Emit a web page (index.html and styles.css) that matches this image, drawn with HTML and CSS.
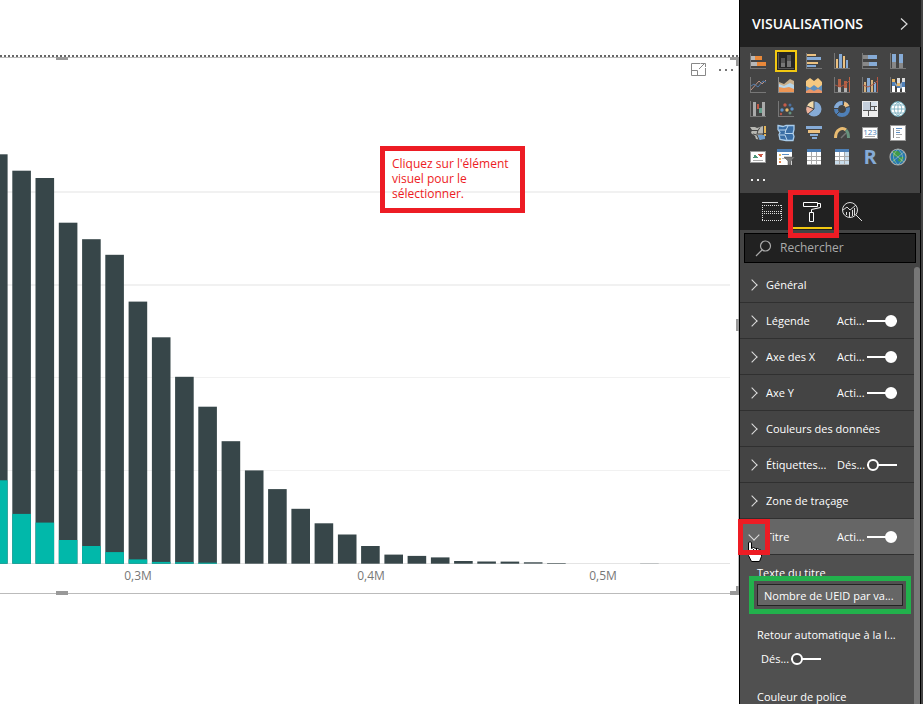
FILE: index.html
```html
<!DOCTYPE html>
<html lang="fr">
<head>
<meta charset="utf-8">
<title>Visualisations</title>
<link rel="stylesheet" href="styles.css">
</head>
<body>
<main class="canvas">
  <section class="visual">
    <svg class="chart" viewBox="0 58 738 535" role="img" aria-label="Histogramme">
      <g fill="#f1f1f1"><path d="M0 191h730v2H0zM0 284h730v2H0zM0 377h730v1H0zM0 470h730v1H0z"/><path fill="#e4e4e4" d="M0 563h730v1H0z"/></g>
      <g fill="#374649">
        <rect x="0" y="154.3" width="7.6" height="409.4"/>
        <rect x="12.3" y="170.7" width="18.6" height="393"/>
        <rect x="35.5" y="178" width="18.6" height="385.7"/>
        <rect x="58.8" y="222.7" width="18.6" height="341"/>
        <rect x="82.1" y="239.2" width="18.6" height="324.5"/>
        <rect x="105.3" y="254.8" width="18.6" height="308.9"/>
        <rect x="128.6" y="301.6" width="18.6" height="262.1"/>
        <rect x="151.9" y="337.3" width="18.6" height="226.4"/>
        <rect x="175.1" y="376.8" width="18.6" height="186.9"/>
        <rect x="198.3" y="406.7" width="18.6" height="157"/>
        <rect x="221.6" y="441.2" width="18.6" height="122.5"/>
        <rect x="244.9" y="470.4" width="18.6" height="93.3"/>
        <rect x="268.1" y="489.1" width="18.6" height="74.6"/>
        <rect x="291.4" y="508.8" width="18.6" height="54.9"/>
        <rect x="314.6" y="523.3" width="18.6" height="40.4"/>
        <rect x="337.9" y="534.5" width="18.6" height="29.2"/>
        <rect x="361.1" y="546" width="18.6" height="17.7"/>
        <rect x="384.4" y="554.6" width="18.6" height="9.1"/>
        <rect x="407.6" y="555.9" width="18.6" height="7.8"/>
        <rect x="430.9" y="557.4" width="18.6" height="6.3"/>
        <rect x="454.1" y="561" width="18.6" height="2.7"/>
        <rect x="477.3" y="561.5" width="18.6" height="2.2"/>
        <rect x="500.6" y="561.6" width="18.6" height="2.1"/>
        <rect x="523.9" y="562.3" width="18.6" height="1.3"/>
        <rect x="547.1" y="563" width="18.6" height=".6"/>
        <rect x="640.1" y="563.3" width="18.6" height=".2"/>
      </g>
      <g fill="#01b8aa">
        <rect x="0" y="480.3" width="7.6" height="83.4"/>
        <rect x="12.3" y="513.9" width="18.6" height="49.8"/>
        <rect x="35.5" y="522.6" width="18.6" height="41.1"/>
        <rect x="58.8" y="540" width="18.6" height="23.7"/>
        <rect x="82.1" y="546" width="18.6" height="17.7"/>
        <rect x="105.3" y="552.1" width="18.6" height="11.6"/>
        <rect x="128.6" y="559.4" width="18.6" height="4.3"/>
        <rect x="151.9" y="561.9" width="18.6" height="1.8"/>
        <rect x="175.1" y="562.2" width="18.6" height="1.5"/>
        <rect x="198.3" y="562.7" width="18.6" height="1"/>
      </g>
      <g class="axis" text-anchor="middle">
        <text x="138" y="580">0,3M</text><text x="371" y="580">0,4M</text><text x="603" y="580">0,5M</text>
      </g>
    </svg>
    <div class="visual-tools">
      <button aria-label="Mode focus"><svg width="15" height="13" viewBox="0 0 15 13" fill="none" stroke="#888"><path d="M9.5.5h-9v12h14V5M.5 7.500h6v5M8 6l5.500-5.500M10 .5h4.500V4"/></svg></button>
      <button aria-label="Plus d’options"><svg width="16" height="2" viewBox="0 0 16 2" fill="#777"><path d="M1 0h2v2H1zM7 0h2v2H7zM13 0h2v2h-2z"/></svg></button>
    </div>
    <i class="handle top"></i><i class="handle bottom"></i><i class="handle side"></i>
    <i class="corner upper"></i><i class="corner lower"></i>
    <p class="callout">Cliquez sur l'élément visuel pour le sélectionner.</p>
  </section>
</main>

<aside class="panel">
  <header class="panel-head">
    <h1>VISUALISATIONS</h1>
    <button aria-label="Réduire le volet"><svg width="8" height="12" viewBox="0 0 8 12" fill="none" stroke="#ddd" stroke-width="1.200"><path d="M1 .5L7 6l-6 5.500"/></svg></button>
  </header>

  <div class="gallery">
    <button aria-label="Barres empilées"><svg viewBox="0 0 16 16"><path fill="#777" d="M0 0h1v15h15v1H0z"/><path fill="#b8b8b8" d="M1 3h4v4H1zM1 9h6v4H1z"/><path fill="#e8883a" d="M5 3h7v4H5zM7 9h9v4H7z"/></svg></button>
    <button class="chosen" aria-label="Histogramme empilé"><svg viewBox="0 0 16 16"><path fill="#555" d="M0 0h1v15h15v1H0zM3 5h4v9H3zM9 2h4v12H9z"/><path fill="#777" d="M3 10h4v4H3zM9 8h4v6H9z"/></svg></button>
    <button aria-label="Barres groupées"><svg viewBox="0 0 16 16"><path fill="#777" d="M0 0h1v15h15v1H0z"/><path fill="#ecc180" d="M1 1h9v2H1zM1 9h11v2H1z"/><path fill="#86abd6" d="M1 4h14v3H1zM1 12h9v2H1z"/></svg></button>
    <button aria-label="Histogramme groupé"><svg viewBox="0 0 16 16"><path fill="#777" d="M0 0h1v15h15v1H0z"/><path fill="#ecc180" d="M2 6h2v9H2zM9 3h2v12H9z"/><path fill="#86abd6" d="M5 1h3v14H5zM12 7h2v8h-2z"/></svg></button>
    <button aria-label="Barres 100 %"><svg viewBox="0 0 16 16"><path fill="#777" d="M0 0h1v15h15v1H0z"/><path fill="#888" d="M1 2h5v4H1zM1 9h6v4H1z"/><path fill="#86abd6" d="M6 2h9v4H6zM7 9h8v4H7z"/></svg></button>
    <button aria-label="Histogramme 100 %"><svg viewBox="0 0 16 16"><path fill="#777" d="M0 0h1v15h15v1H0z"/><path fill="#888" d="M2 8h4v7H2zM9 10h4v5H9z"/><path fill="#86abd6" d="M2 1h4v8H2zM9 1h4v9H9z"/></svg></button>

    <button aria-label="Courbes"><svg viewBox="0 0 16 16"><path fill="#777" d="M0 0h1v15h15v1H0z"/><g class="smooth" fill="none"><path stroke="#c09283" d="M1 13L9 4l3 3 4-4"/><path stroke="#547ba9" d="M1 9l3-2 4 3 5-6 3 1"/></g></svg></button>
    <button aria-label="Aires"><svg class="smooth" viewBox="0 0 16 16"><path fill="#c9b18e" d="M1 5l5 2 6-5 4 2v8H1z"/><path fill="#b7d6ea" d="M1 7l5 2 6-3 4 2v6H1z"/><path fill="#ed9655" d="M1 10l5 1 5-1 5 2v3H1z"/><path fill="#888" d="M0 0h1v15h15v1H0z"/></svg></button>
    <button aria-label="Aires empilées"><svg class="smooth" viewBox="0 0 16 16"><path fill="#f5c880" d="M0 4l4-3 4 3 4-3 4 4v9H0z"/><path fill="#5f8fbd" d="M0 9l4 2 4-3 4 3 4-3v6H0z"/><path fill="#e99668" d="M0 14l4-2 4 2 4-2 4 2v2H0z"/></svg></button>
    <button aria-label="Courbe et histogramme empilé"><svg viewBox="0 0 16 16"><path fill="#777" d="M0 0h1v15h15v1H0z"/><path fill="#b86245" d="M4 2h3v8H4zM10 4h3v7h-3zM15 0h1v15h-1z"/><path fill="#b3b3b3" d="M4 10h3v5H4zM10 11h3v4h-3z"/><path class="smooth" fill="none" stroke="#a65643" d="M1 8l5 2 6-3 4-4"/></svg></button>
    <button aria-label="Courbe et histogramme groupé"><svg viewBox="0 0 16 16"><path fill="#777" d="M0 0h1v15h15v1H0z"/><path fill="#d6b17d" d="M2 5h2v10H2zM9 3h2v12H9z"/><path fill="#86abd6" d="M5 1h3v14H5zM12 5h2v10h-2z"/><path fill="#b65643" d="M15 0h1v15h-1z"/><path class="smooth" fill="none" stroke="#a65643" d="M1 8l5 2 6-3 4-4"/></svg></button>
    <button aria-label="Ruban"><svg viewBox="0 0 16 16"><path fill="#777" d="M0 0h1v15h15v1H0z"/><path class="smooth" fill="#8da8c4" d="M3 5h2l3 4 5-5v7l-4 1-4-4z"/><path fill="#e9b967" d="M2 2h3v3H2zM7 6h3v3H7z"/><path fill="#ddd" d="M7 1h3v5H7zM12 1h3v4h-3z"/><path fill="#fff" d="M2 9h3v6H2zM7 11h3v4H7zM12 10h3v5h-3z"/><path fill="#4f80b8" d="M2 5h3v4H2zM7 9h3v2H7zM12 5h3v5h-3z"/></svg></button>

    <button aria-label="Cascade"><svg viewBox="0 0 16 16"><path fill="#777" d="M0 0h1v15h15v1H0z"/><path fill="#aaa" d="M3 1h3v14H3zM12 1h3v14h-3z"/><path fill="#c25c49" d="M7 3h2v5H7z"/><path fill="#67a08d" d="M9 7h3v5H9z"/></svg></button>
    <button aria-label="Nuage de points"><svg viewBox="0 0 16 16"><path fill="#777" d="M0 0h1v15h15v1H0z"/><g class="smooth"><circle cx="7" cy="4" r="1.700" fill="#c85c49"/><circle cx="12" cy="4" r="1.500" fill="#4b6f9e"/><circle cx="4" cy="9" r="1.700" fill="#5d91c7"/><circle cx="9" cy="9" r="1.700" fill="#ecbd6c"/><circle cx="14" cy="8" r="1.700" fill="#5d91c7"/><circle cx="12" cy="12" r="1.500" fill="#65927d"/><circle cx="3" cy="13" r="1.200" fill="#b75847"/></g></svg></button>
    <button aria-label="Secteurs"><svg class="smooth" viewBox="0 0 16 16"><circle cx="8" cy="8" r="7.500" fill="#86abd6"/><path fill="#edb09a" d="M8 8L2 13A8 8 0 0 1 1 5z"/><path fill="#f0d9aa" d="M8 8L1 5a8 8 0 0 1 7-5z"/><path stroke="#444" fill="none" d="M8 0v8L2 13M8 8L1 5"/></svg></button>
    <button aria-label="Anneau"><svg class="smooth" viewBox="0 0 16 16" fill="none" stroke-width="4"><circle cx="8" cy="8" r="6" stroke="#4f80b8"/><path stroke="#86abd6" d="M2 8a6 6 0 0 1 6-6"/><path stroke="#efc286" d="M10 2.300a6 6 0 0 1 3.500 3.500"/><path stroke="#444" stroke-width="1" d="M9.500 0v4M12 6.500l4-1M2 14l3-3M0 7.500h4"/></svg></button>
    <button aria-label="Treemap"><svg viewBox="0 0 16 16"><path fill="#eee" d="M0 0h16v16H0z"/><path fill="#c4cfdc" d="M1 1h7v8H1z"/><path fill="#d9e2ec" d="M9 1h6v4H9zM9 6h3v3H9z"/><path fill="#555" d="M8 1h1v8H8zM1 9h14v1H1zM9 5h6v1H9zM12 6h1v3h-1zM6 10h1v5H6z"/></svg></button>
    <button aria-label="Carte"><svg class="smooth" viewBox="0 0 16 16"><circle cx="8" cy="8" r="7.300" fill="#fff" stroke="#79b8c7"/><path fill="none" stroke="#6da6b9" stroke-width=".8" d="M8 0v16M0 8h16M2 4h12M2 12h12M8 1c-5 4-5 10 0 14M8 1c5 4 5 10 0 14"/></svg></button>

    <button aria-label="Carte choroplèthe"><svg viewBox="0 0 16 16"><g class="smooth"><path fill="#b7b7b2" d="M0 2h5l2 1 6-2v7l-2 7-5-1-1-3-4-3 1-3z"/><path fill="#6f9dcc" d="M8 10l7 0v4l-6 1z"/><path fill="none" stroke="#444" d="M0 5.500h8l2-3M8 5l-1 4h7M3 9l4 1 2 5"/></g><path fill="#e4b65a" d="M14 1h2v7h-2zM14 9h2v2h-2z"/></svg></button>
    <button aria-label="Carte de formes"><svg class="smooth wide" viewBox="-1 0 18 17"><path fill="#3a6ea5" stroke="#a9cceb" stroke-width="1.300" d="M0 1l5 1 3-1h8v4l-1 4 1 3-1 4H8l-6-1-1-5 1-2-2-3z"/><path fill="none" stroke="#b9d5ed" d="M1 5.500h7l2-4M8 5l-1 4h8M2 10.500h5l2 5"/></svg></button>
    <button aria-label="Entonnoir"><svg viewBox="0 0 16 16"><path fill="#86abd6" d="M0 1h16v3H0zM4 9h8v2H4zM6 12h5v2H6z"/><path fill="#ecc180" d="M2 5h12v3H2z"/></svg></button>
    <button aria-label="Jauge"><svg class="smooth" viewBox="0 0 16 16" fill="none"><path stroke="#e8bb72" stroke-width="3" d="M1.500 13c0-9 7-11 10.500-8"/><path stroke="#67927d" stroke-width="3" d="M12 5c2 2 2.500 4 2.500 8"/><path stroke="#777" stroke-width="1.500" d="M7 13l5-5"/></svg></button>
    <button aria-label="Carte de valeur"><svg viewBox="0 0 16 16"><path fill="#999" d="M0 2h16v12H0z"/><path fill="#fff" d="M1 3h14v10H1z"/><text x="8" y="10" font-size="8" text-anchor="middle" fill="#4e83b8">123</text><path fill="#aaa" d="M3 11h10v1H3z"/></svg></button>
    <button aria-label="Carte à plusieurs lignes"><svg viewBox="0 0 16 16"><path fill="#999" d="M0 0h16v16H0z"/><path fill="#fff" d="M1 1h14v14H1z"/><path fill="#888" d="M3 3h1v10H3z"/><path fill="#5d90c6" d="M6 3h6v1H6zM6 7h4v1H6z"/><path fill="#aaa" d="M6 5h4v1H6zM6 9h6v1H6zM6 12h4v1H6z"/></svg></button>

    <button aria-label="Indicateur KPI"><svg viewBox="0 0 16 16"><path fill="#999" d="M0 2h16v12H0z"/><path fill="#fff" d="M1 3h14v10H1z"/><path fill="#4f9678" d="M3 9l2-4 3 4z"/><path fill="#c95745" d="M8 5h5l-2 4z"/><path fill="#aaa" d="M3 11h10v1H3z"/></svg></button>
    <button aria-label="Segment"><svg class="wide" viewBox="0 0 18 16"><path fill="#fff" d="M0 0h15v16H0z"/><path fill="#4d80b7" d="M0 0h15v3H0z"/><path fill="#5d90c6" d="M5 5h7v1H5z"/><path fill="#e6b967" d="M2 5h2v2H2zM2 9h2v2H2z"/><path fill="#e4804a" d="M2 12h2v2H2z"/><path fill="#bbb" d="M5 9h4v1H5z"/><path class="smooth" fill="#777" stroke="#444" stroke-width=".5" d="M7 8h11l-4 4v4h-3v-4z"/></svg></button>
    <button aria-label="Tableau"><svg viewBox="0 0 16 16"><path fill="#fff" d="M1 0h14v16H1z"/><path fill="#4d80b7" d="M1 0h14v3H1z"/><path fill="#aaa" d="M1 7h14v1H1zM1 11h14v1H1zM5 3h1v12H5zM10 3h1v12h-1zM1 15h14v1H1z"/></svg></button>
    <button aria-label="Matrice"><svg viewBox="0 0 16 16"><path fill="#fff" d="M1 0h14v16H1z"/><path fill="#c9ddec" d="M11 3h4v12H1v-3h10z"/><path fill="#4d80b7" d="M1 0h14v3H1z"/><path fill="#aaa" d="M1 7h14v1H1zM1 11h14v1H1zM5 3h1v12H5zM10 3h1v12h-1zM1 15h14v1H1z"/></svg></button>
    <button class="script" aria-label="Visuel R">R</button>
    <button aria-label="ArcGIS"><svg class="smooth wide" viewBox="0 0 18 18"><circle cx="9" cy="9" r="8" fill="#2378ae" stroke="#aaa" stroke-width="1.200"/><path fill="#3f9a48" d="M4 3l5 0 3 3-4 3-4-1zM10 9l5 0-2 5-4-1zM3 11l3 1 1 3z"/><path fill="none" stroke="#b0c7bc" stroke-width=".6" d="M3 4l12 10M15 4L3 14M9 1c-6 6-6 10 0 16M9 1c6 6 6 10 0 16"/></svg></button>
    <button class="more" aria-label="Autres visuels"><svg viewBox="0 0 16 16" fill="#eee"><path d="M1 6h2v2H1zM7 6h2v2H7zM13 6h2v2h-2z"/></svg></button>
  </div>

  <nav class="tabs">
    <button aria-label="Champs"><svg width="22" height="20" viewBox="0 0 22 20" fill="none" stroke="#ddd"><path d="M1 .5h16"/><path stroke-dasharray="1 1" d="M1 3.500h20M1 9.500h20M1 11.500h20M1 18.500h20M1.500 3v7M20.500 3v7M1.500 11v8M20.500 11v8"/></svg></button>
    <button class="current" aria-label="Format"><svg width="20" height="22" viewBox="0 0 20 22" fill="none" stroke="#fff"><path d="M1.500 1.500h14v4h-14zM15.500 2.500h3v4l-9 2v3M7.500 11.500h4v9h-4z"/></svg></button>
    <button aria-label="Analytique"><svg width="22" height="22" viewBox="0 0 22 22" fill="none" stroke="#ddd"><circle cx="9" cy="9" r="7.500"/><path d="M15 14l6 6M2 9l4-3 3 3 6-5M5.500 11v3M8.500 11v5M11.500 9v6M13.500 7v7"/></svg></button>
  </nav>

  <div class="search">
    <svg width="17" height="17" viewBox="0 0 17 17" fill="none" stroke="#aaa" stroke-width="1.200"><circle cx="10.500" cy="6" r="5"/><path d="M7 10l-6 6"/></svg>
    <input type="search" placeholder="Rechercher" aria-label="Rechercher">
  </div>

  <div class="scroller">
    <div class="options">
      <div class="row"><button class="fold"><i class="chevron"></i>Général</button></div>
      <div class="row"><button class="fold"><i class="chevron"></i>Légende</button><label class="toggle">Acti...<input type="checkbox" checked></label></div>
      <div class="row"><button class="fold"><i class="chevron"></i>Axe des X</button><label class="toggle">Acti...<input type="checkbox" checked></label></div>
      <div class="row"><button class="fold"><i class="chevron"></i>Axe Y</button><label class="toggle">Acti...<input type="checkbox" checked></label></div>
      <div class="row"><button class="fold"><i class="chevron"></i>Couleurs des données</button></div>
      <div class="row"><button class="fold"><i class="chevron"></i>Étiquettes...</button><label class="toggle">Dés...<input type="checkbox"></label></div>
      <div class="row"><button class="fold"><i class="chevron"></i>Zone de traçage</button></div>
      <div class="row open"><button class="fold"><i class="chevron"></i>Titre</button><label class="toggle">Acti...<input type="checkbox" checked></label>
        <svg class="pointer" width="17" height="22" viewBox="0 0 17 22"><path fill="#fff" stroke="#000" d="M2.500 1.500q1.500-1.500 3 0v6l2-1 2 1 2 0 2 1 2 1v6l-2 5h-8l-3-6-2-4 2-1z"/><path stroke="#000" d="M7.500 8v3M10.500 8v3M13.500 9v3"/></svg>
        <i class="mark"></i>
      </div>
      <div class="details">
        <label for="title-text">Texte du titre</label>
        <div class="field"><input id="title-text" type="text" value="Nombre de UEID par va..."></div>
        <span id="wrap-name">Retour automatique à la l...</span>
        <label class="toggle">Dés...<input type="checkbox" aria-describedby="wrap-name"></label>
        <span>Couleur de police</span>
      </div>
    </div>
    <div class="scrollbar"></div>
  </div>
</aside>
</body>
</html>
```

FILE: styles.css
```css
*, ::before, ::after { box-sizing: border-box; }
body {
  margin: 0;
  height: 100vh;
  display: grid;
  grid-template-columns: minmax(0, 1fr) 184px;
  overflow: hidden;
  background: #fff;
  color: #fff;
  font: 12px/16px "Open Sans", "Noto Sans", sans-serif;
}
button {
  padding: 0;
  border: 0;
  background: none;
  color: inherit;
  font: inherit;
}
svg { display: block; }

/* report canvas */
.canvas { padding-top: 55px; }
.canvas::before {
  content: "";
  display: block;
  height: 2px;
  background: repeating-linear-gradient(90deg, #666 0 2px, #fff 2px 4px);
}
.visual {
  position: relative;
  border: solid #bbb;
  border-width: 1px 1px 1px 0;
}
.chart { width: 100%; }
.axis { fill: #777; font-size: 12px; }
.visual-tools {
  position: absolute;
  top: 5px;
  right: 4px;
  display: flex;
  align-items: center;
  gap: 12px;
}
.handle, .corner { position: absolute; background: #999; }
.handle { width: 12px; height: 4px; left: 56px; }
.handle.top { top: -1px; height: 3px; }
.handle.bottom { bottom: -2px; }
.handle.side { left: auto; right: -1px; top: 261px; width: 3px; height: 12px; }
.corner {
  right: -1px;
  width: 9px;
  height: 9px;
  background: none;
  border: 0 solid #999;
}
.corner.upper { top: -1px; border-width: 3px 3px 0 0; }
.corner.lower { bottom: -2px; border-width: 0 3px 4px 0; }
.callout {
  position: absolute;
  left: 380px;
  top: 88px;
  width: 145px;
  height: 67px;
  margin: 0;
  padding: 5px 7px;
  border: 5px solid #ed1c24;
  color: #ed1c24;
  font-size: 12px;
  line-height: 15px;
}

/* side panel */
.panel {
  display: flex;
  flex-direction: column;
  height: 100vh;
  min-height: 0;
  overflow: hidden;
  border-left: 1px solid #000;
  border-right: 2px solid #444;
  background: #444;
  box-shadow: inset -1px 0 #000;
}
/* the red outline of the open row reaches over the panel's left edge */
.panel { overflow: clip; overflow-clip-margin: 4px; }
.panel-head {
  display: flex;
  flex: none;
  align-items: center;
  justify-content: space-between;
  height: 47px;
  padding: 0 13px 0 12px;
  background: #212121;
}
.panel-head h1 { margin: 0; font-size: 14px; font-weight: 600; }
.gallery {
  display: grid;
  grid-template-columns: repeat(6, 28px);
  grid-auto-rows: 24px;
  height: 146px;
  padding: 2px 4px 0;
  flex: none;
}
.gallery button { display: grid; place-items: center; }
.gallery svg { width: 16px; height: 16px; shape-rendering: crispEdges; }
.gallery .wide { width: 18px; height: 18px; }
.gallery .smooth { shape-rendering: auto; }
.gallery .chosen {
  width: 22px;
  height: 22px;
  place-self: center;
  border: 2px solid #f2c811;
  background: #262626;
}
.gallery .script { color: #86abd6; font-size: 20px; font-weight: 700; }

.tabs {
  display: flex;
  flex: none;
  height: 37px;
  padding-left: 12px;
  background: #212121;
}
.tabs button {
  position: relative;
  display: grid;
  place-items: center;
  width: 40px;
}
.current::before {
  content: "";
  position: absolute;
  inset: auto 0 1px 1px;
  height: 2px;
  background: #f2c811;
}
.current::after {
  content: "";
  position: absolute;
  inset: -3px -7px -8px -4px;
  border: 5px solid #ed1c24;
  z-index: 1;
}
.search {
  display: flex;
  flex: none;
  align-items: center;
  gap: 8px;
  height: 30px;
  margin: 3px 5px 4px 4px;
  padding-left: 10px;
  border: 1px solid #000;
  background: #212121;
}
input { border: 0; border-radius: 0; outline: 0; color: inherit; font: inherit; }
.search input {
  flex: 1;
  min-width: 0;
  padding: 0;
  background: none;
}
.search input::placeholder { color: #aaa; }

.scroller {
  display: flex;
  flex: 1;
  min-height: 0;
  padding-right: 1px;
  font-size: 11px;
}
.options { display: flex; flex: 1; flex-direction: column; min-width: 0; min-height: 0; }
.scrollbar { width: 6px; border-radius: 3px 3px 0 0; background: #777; }
.row {
  position: relative;
  display: grid;
  flex: none;
  grid-template-columns: 87px 1fr;
  align-items: center;
  height: 36px;
  padding: 1px 0 0 10px;
  border-bottom: 1px solid #303030;
}
.row.open { background: #666; }
.fold {
  display: flex;
  align-items: center;
  gap: 8px;
  white-space: nowrap;
  text-align: left;
}
.chevron {
  flex: none;
  width: 8px;
  height: 8px;
  border: solid #ddd;
  border-width: 1px 1px 0 0;
  transform: translateX(-2px) rotate(45deg);
}
.open .chevron { transform: translateY(-2px) rotate(135deg); }
.toggle { display: grid; grid-template-columns: 30px 30px; align-items: center; }
.toggle input {
  appearance: none;
  position: relative;
  width: 30px;
  height: 12px;
  margin: 0;
  background: linear-gradient(#fff, #fff) center / 100% 2px no-repeat;
}
.toggle input::before {
  content: "";
  position: absolute;
  width: 12px;
  height: 12px;
  border: 2px solid #fff;
  border-radius: 50%;
  background: #444;
}
.toggle input:checked::before { right: 0; background: #fff; }
.pointer { position: absolute; left: 6px; top: 22px; z-index: 1; }
.mark {
  position: absolute;
  left: -2px;
  top: 0;
  width: 32px;
  height: 36px;
  border: 5px solid #ed1c24;
  z-index: 2;
}
.details {
  display: flex;
  flex: 1;
  flex-direction: column;
  min-height: 0;
  overflow: hidden;
  padding: 10px 3px 0 17px;
  background: #505050;
  white-space: nowrap;
}
.details > * { flex: none; }
.field {
  margin: -5px 0 13px -8px;
  padding: 3px;
  border: 5px solid #22b14c;
  position: relative;
}
.field input {
  display: block;
  width: 100%;
  height: 22px;
  padding: 0 6px;
  border: 1px solid #222;
  background: #666;
}
.details .toggle { margin: 8px 4px 22px; }
```
